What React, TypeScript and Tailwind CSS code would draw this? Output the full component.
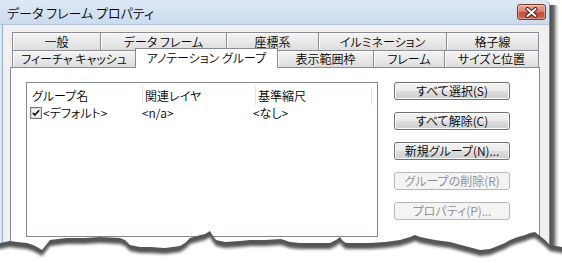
import React from "react";

const F = "font-['Noto_Sans_CJK_JP',sans-serif] [font-feature-settings:'palt'] font-[350]";

type T = { label: string; w: string; active?: boolean };

const row1: T[] = [
  { label: "一般", w: "w-[89px]" },
  { label: "データ フレーム", w: "w-[127px]" },
  { label: "座標系", w: "w-[93px]" },
  { label: "イルミネーション", w: "w-[129px]" },
  { label: "格子線", w: "w-[93px]" },
];
const row2: T[] = [
  { label: "フィーチャ キャッシュ", w: "w-[124px]" },
  { label: "アノテーション グループ", w: "w-[143px]", active: true },
  { label: "表示範囲枠", w: "w-[97px]" },
  { label: "フレーム", w: "w-[72px]" },
  { label: "サイズと位置", w: "w-[95px]" },
];

function Tab({ t, first, h }: { t: T; first: boolean; h: string }) {
  if (t.active) {
    return (
      <div
        className={`${t.w} -ml-px h-[20px] mb-[-1px] relative z-10 bg-white border border-b-0 border-[#898c95] flex items-center justify-center text-[12px] leading-none text-black pb-[1px]`}
      >
        {t.label}
      </div>
    );
  }
  return (
    <div
      className={`${t.w} ${first ? "" : "-ml-px"} ${h} border border-b-0 border-[#898c95] bg-[linear-gradient(#f4f4f4,#e9e9e9_50%,#dddddd)] shadow-[inset_1px_1px_0_#ffffff] flex items-center justify-center text-[12px] leading-none text-black`}
    >
      {t.label}
    </div>
  );
}

function Btn({ label, disabled }: { label: string; disabled?: boolean }) {
  return disabled ? (
    <div className="w-[116px] h-[18px] rounded-[3px] border border-[#b5b8bb] bg-[#f4f4f4] flex items-center justify-center text-[12px] leading-none text-[#8a8a8a]">
      {label}
    </div>
  ) : (
    <div className="w-[116px] h-[18px] rounded-[3px] border border-[#707070] bg-[linear-gradient(#f2f2f2,#ebebeb_50%,#dddddd_50%,#cfcfcf)] shadow-[inset_0_0_0_1px_#fbfbfb] flex items-center justify-center text-[12px] leading-none text-black">
      {label}
    </div>
  );
}

const pts: [number, number][] = [
  [-10, 243], [0, 243], [5, 242], [10, 241], [17, 242], [27, 243], [33, 245], [37, 247], [42, 250], [46, 245],
  [50, 240], [58, 239], [67, 238], [85, 238], [100, 237], [120, 238], [125, 240], [130, 245], [140, 247],
  [150, 247], [165, 248], [180, 246], [185, 243], [190, 238], [197, 236], [205, 234], [210, 231], [213, 236],
  [216, 240], [225, 242], [240, 241], [250, 240], [265, 240], [281, 239], [290, 242], [300, 243], [315, 243],
  [330, 243], [336, 240], [340, 237], [343, 241], [346, 243], [360, 243], [370, 243], [385, 242], [400, 240],
  [410, 237], [415, 235], [420, 237], [425, 238], [435, 240], [450, 242], [465, 246], [480, 250], [490, 249],
  [495, 247], [505, 243], [510, 240], [518, 237], [525, 235], [530, 233], [535, 232], [540, 236], [545, 240],
  [550, 245], [556, 246], [562, 247], [575, 247],
];
const tornD =
  "M" + pts.map((p) => `${p[0]},${p[1]}`).join(" L") + " L575,290 L-10,290 Z";

export default function App() {
  return (
    <div className={`relative w-[562px] h-[263px] bg-white overflow-hidden ${F}`}>
      <div className="flex">
        {/* window */}
        <div className="w-[550px] h-[263px] flex flex-col border-r border-[#5b8fc4] rounded-tr-[6px] overflow-hidden">
          {/* title bar */}
          <div className="h-[25px] shrink-0 flex items-center justify-between pl-[7px] pr-[3px] bg-[linear-gradient(#dfe9f5,#cbdbee)] border-b border-[#b4c6dc]">
            <span className="text-[13px] leading-none text-black">データ フレーム プロパティ</span>
            <div className="w-[29px] h-[16px] rounded-[3px] border border-[#7a3a2e] bg-[linear-gradient(#e9aa9b,#d88170_45%,#c44a33_55%,#d0684d)] shadow-[inset_0_0_0_1px_rgba(255,255,255,0.35)] flex items-center justify-center">
              <svg width="13" height="11" viewBox="0 0 13 11">
                <path d="M2.5 2 L10.5 9 M10.5 2 L2.5 9" stroke="#4a1d15" strokeWidth="4" strokeLinecap="round" />
                <path d="M2.5 2 L10.5 9 M10.5 2 L2.5 9" stroke="#ffffff" strokeWidth="2" strokeLinecap="round" />
              </svg>
            </div>
          </div>
          {/* body */}
          <div className="flex-1 flex bg-[#dfe8f3]">
            <div className="w-[2px]" />
            <div className="flex-1 bg-[#f0f0f0] border-l border-[#8fb0d6] pt-[7px] pl-[7px]">
              {/* tabs */}
              <div className="pl-[2px]">
                <div className="flex">
                  {row1.map((t, i) => (
                    <Tab key={t.label} t={t} first={i === 0} h="h-[18px]" />
                  ))}
                </div>
                <div className="flex items-end h-[17px]">
                  {row2.map((t, i) => (
                    <Tab key={t.label} t={t} first={i === 0} h="h-[17px]" />
                  ))}
                </div>
              </div>
              {/* panel */}
              <div className="relative w-[530px] h-[200px] bg-white border border-[#898c95] pt-[14px] pl-[15px] flex items-start">
                {/* list view */}
                <div className="w-[352px] h-[155px] border border-[#828790] bg-white text-[12px] leading-none text-black">
                  <div className="flex h-[22px] items-center pt-[3px]">
                    <div className="w-[115px] pl-[5px]">グループ名</div>
                    <div className="w-px h-full bg-[#e2e4e7]" />
                    <div className="w-[112px] pl-[2px]">関連レイヤ</div>
                    <div className="w-px h-full bg-[#e2e4e7]" />
                    <div className="w-[115px] pl-[2px]">基準縮尺</div>
                    <div className="w-px h-full bg-[#e2e4e7]" />
                    <div className="flex-1" />
                  </div>
                  <div className="flex h-[16px] items-center">
                    <div className="w-[115px] pl-[3px] flex items-center gap-[1px]">
                      <svg width="12" height="12" viewBox="0 0 12 12">
                        <rect x="0.5" y="0.5" width="11" height="11" fill="#ffffff" stroke="#7b7b7b" />
                        <rect x="1.5" y="1.5" width="9" height="9" fill="#f4f4f4" stroke="#d8d8d8" />
                        <path d="M2.8 5.8 L4.9 8 L9.2 3.2" stroke="#111" strokeWidth="1.7" fill="none" />
                      </svg>
                      <span>&lt;デフォルト&gt;</span>
                    </div>
                    <div className="w-[111px]">&lt;n/a&gt;</div>
                    <div>&lt;なし&gt;</div>
                  </div>
                </div>
                {/* buttons */}
                <div className="ml-[16px] flex flex-col gap-[12px]">
                  <Btn label="すべて選択(S)" />
                  <Btn label="すべて解除(C)" />
                  <Btn label="新規グループ(N)..." />
                  <Btn label="グループの削除(R)" disabled />
                  <Btn label="プロパティ(P)..." disabled />
                </div>
              </div>
            </div>
          </div>
        </div>
        {/* right drop shadow */}
        <div className="w-[9px] h-[250px] mt-[5px] bg-[linear-gradient(to_right,#4d4d4d,#6a6a6a_40%,rgba(120,120,120,0.4)_70%,rgba(255,255,255,0))] rounded-tr-[4px]" />
      </div>
      {/* torn bottom edge */}
      <svg className="absolute left-0 top-0 pointer-events-none" width="562" height="263" viewBox="0 0 562 263">
        <defs>
          <filter id="b" x="-5%" y="-50%" width="110%" height="200%">
            <feGaussianBlur stdDeviation="1.6" />
          </filter>
        </defs>
        <path d={tornD} fill="#555555" />
        <path d={tornD} fill="#ffffff" transform="translate(0,6)" filter="url(#b)" />
      </svg>
    </div>
  );
}
